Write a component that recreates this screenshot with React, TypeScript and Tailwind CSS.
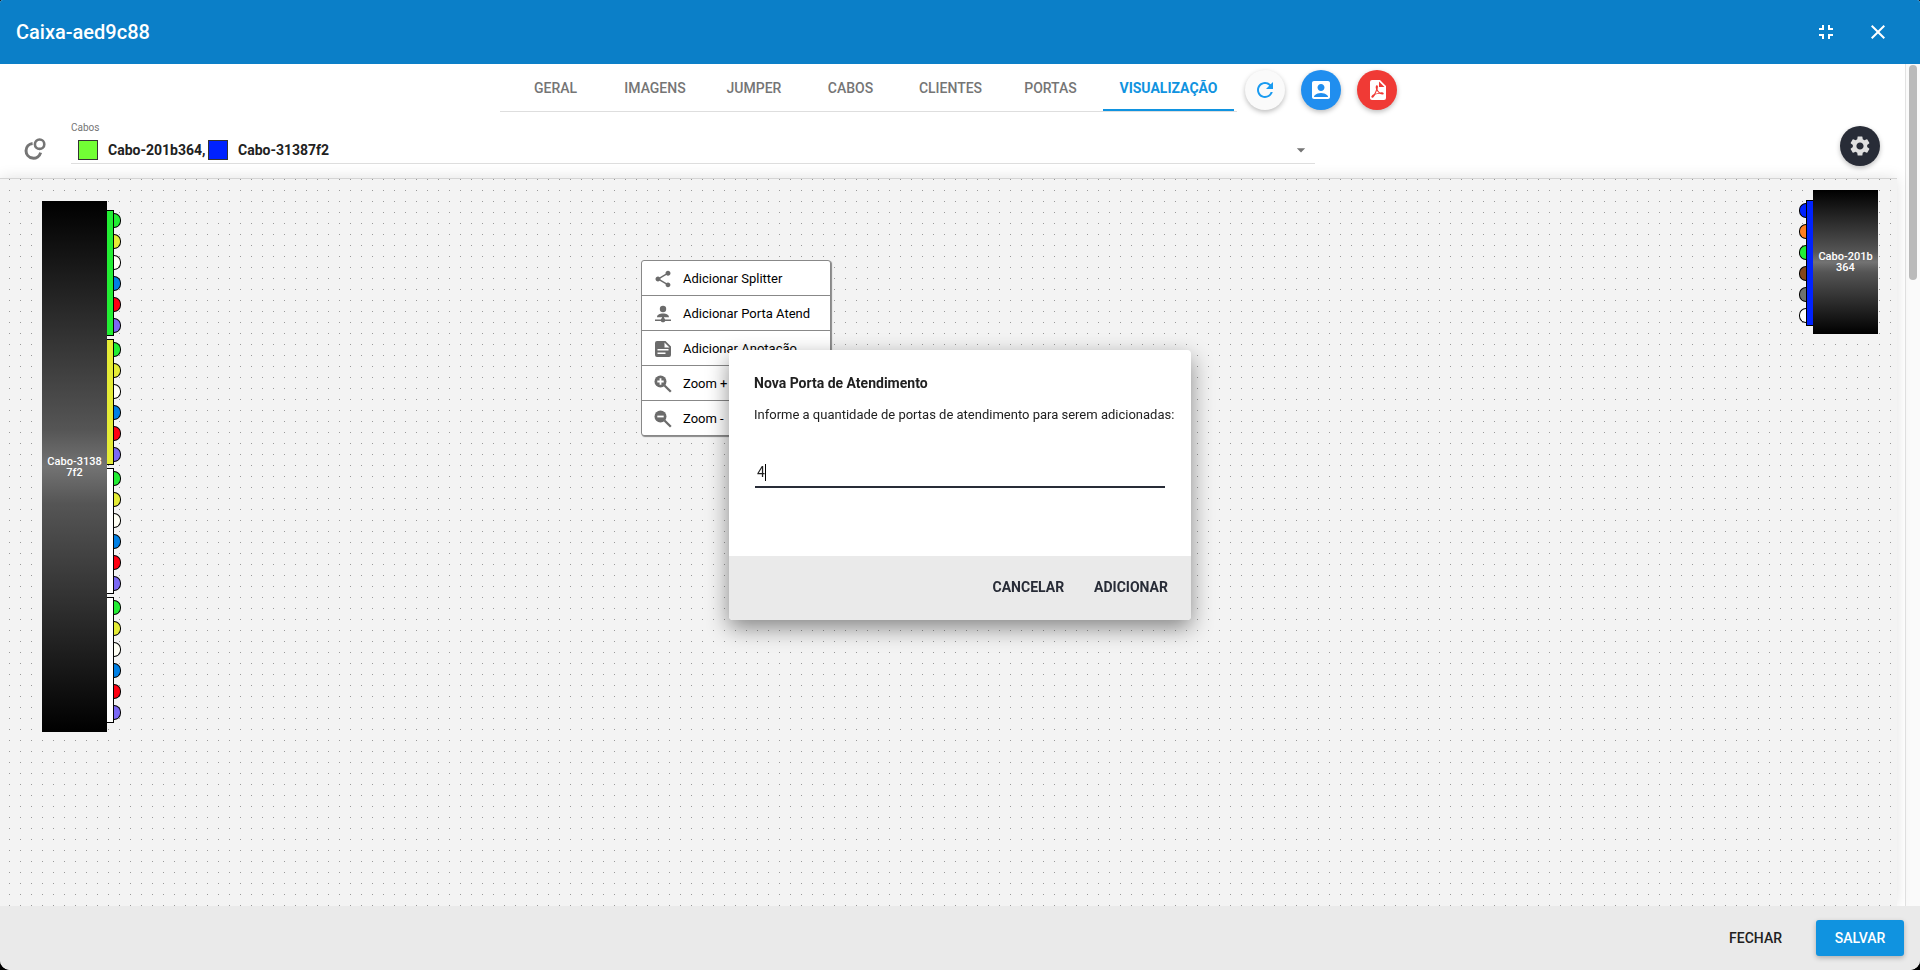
import { useState } from "react";
import type { ReactNode } from "react";
import {
  MdAccountBox,
  MdArrowDropDown,
  MdClose,
  MdFullscreenExit,
  MdRefresh,
  MdSettings,
  MdShare,
} from "react-icons/md";

type Tube = { color: string; ports: string[] };

const tabs = [
  { label: "GERAL", width: "w-[89px]" },
  { label: "IMAGENS", width: "w-[110px]" },
  { label: "JUMPER", width: "w-[88px]" },
  { label: "CABOS", width: "w-[105px]" },
  { label: "CLIENTES", width: "w-[95px]" },
  { label: "PORTAS", width: "w-[105px]" },
  { label: "VISUALIZAÇÃO", width: "w-[131px]" },
];

const leftPorts = [
  "bg-[#22ee33]",
  "bg-[#e5ec35]",
  "bg-[#fffff5]",
  "bg-[#0080e5]",
  "bg-[#ff0011]",
  "bg-[#7b68f5]",
];

const leftTubes: Tube[] = [
  { color: "bg-[#22ee33]", ports: leftPorts },
  { color: "bg-[#e5ec35]", ports: leftPorts },
  { color: "bg-white", ports: leftPorts },
  { color: "bg-white", ports: leftPorts },
];

const rightTubes: Tube[] = [
  {
    color: "bg-[#0022ff]",
    ports: [
      "bg-[#0022ff]",
      "bg-[#ff7f1f]",
      "bg-[#22ee33]",
      "bg-[#84471c]",
      "bg-[#6f736f]",
      "bg-white",
    ],
  },
];

function RotateIcon() {
  return (
    <svg viewBox="0 0 22 22" className="size-[22px]" fill="none" stroke="#757575">
      <circle cx="15.6" cy="6.2" r="4.7" strokeWidth="2.6" />
      <path d="M8.6 5.4A7.4 7.4 0 1 0 16.6 14.6" strokeWidth="3" />
    </svg>
  );
}

function PdfIcon() {
  return (
    <svg viewBox="0 0 24 24" className="size-6" fill="currentColor">
      <path d="M14 9h5.5L14 3.5V9M7 2h8l6 6v12a2 2 0 0 1-2 2H7c-1.11 0-2-.9-2-2V4a2 2 0 0 1 2-2m4.93 10.44c.41.9.93 1.64 1.53 2.15l.41.32c-.87.16-2.07.44-3.34.93l-.11.04.5-1.04c.45-.87.78-1.66 1.01-2.4m6.48 3.81c.18-.18.27-.41.28-.66.03-.2-.02-.39-.12-.55-.29-.47-1.04-.69-2.28-.69l-1.29.07-.87-.58c-.63-.52-1.2-1.43-1.6-2.56l.04-.14c.33-1.33.64-2.94-.02-3.6a.85.85 0 0 0-.61-.24h-.24c-.37 0-.7.39-.79.77-.37 1.33-.15 2.06.22 3.27v.01c-.25.88-.57 1.9-1.08 2.93l-.96 1.8-.89.49c-1.2.75-1.77 1.59-1.88 2.12-.04.19-.02.36.05.54l.03.05.48.31.44.11c.81 0 1.73-.95 2.97-3.07l.18-.07c1.03-.33 2.31-.56 4.03-.75 1.03.51 2.24.74 3 .74.44 0 .74-.11.91-.3" />
    </svg>
  );
}

function PortIcon() {
  return (
    <svg viewBox="0 0 18 18" className="size-[18px]" fill="currentColor">
      <circle cx="9" cy="4" r="3.2" />
      <path d="M3 12.2C3 9.6 5.6 8.4 9 8.4s6 1.2 6 3.8zM8 12h2v2H8zM1 14.4h5.8c.3-.8 1.2-1.3 2.2-1.3s1.9.5 2.2 1.3H17v1.5h-5.8c-.3.8-1.2 1.3-2.2 1.3s-1.9-.5-2.2-1.3H1z" />
    </svg>
  );
}

function NoteIcon() {
  return (
    <svg viewBox="0 0 18 18" className="size-[18px]" fill="currentColor">
      <path
        fillRule="evenodd"
        d="M3 1h8.500L17 6.500V15a2 2 0 0 1-2 2H3a2 2 0 0 1-2-2V3a2 2 0 0 1 2-2zm7.500 1.500v5h5zM3.500 9v1.500h11V9zm0 3.500V14h8v-1.500z"
      />
    </svg>
  );
}

function ZoomIcon({ plus = false }: { plus?: boolean }) {
  return (
    <svg viewBox="0 0 18 18" className="size-[18px]" fill="currentColor">
      <circle cx="6.5" cy="6.5" r="6" />
      <path d="M10.5 10.5l6.300 6.300" stroke="currentColor" strokeWidth="2.3" />
      <path
        d={plus ? "M3.300 6.500h6.400M6.500 3.300v6.400" : "M3.300 6.500h6.400"}
        stroke="white"
        strokeWidth="1.8"
      />
    </svg>
  );
}

const menuItems: { label: string; icon: ReactNode }[] = [
  { label: "Adicionar Splitter", icon: <MdShare size={20} /> },
  { label: "Adicionar Porta Atend", icon: <PortIcon /> },
  { label: "Adicionar Anotação", icon: <NoteIcon /> },
  { label: "Zoom +", icon: <ZoomIcon plus /> },
  { label: "Zoom -", icon: <ZoomIcon /> },
];

function Cable({
  name,
  tubes,
  mirrored = false,
}: {
  name: string;
  tubes: Tube[];
  mirrored?: boolean;
}) {
  return (
    <div className={`flex ${mirrored ? "flex-row-reverse" : ""}`}>
      <div className="flex w-[65px] items-center bg-[linear-gradient(#000000,#555555_43%,#737373_50%,#555555_57%,#000000)] px-1 text-center text-[11px] leading-[11px] font-medium break-all text-white">
        {name}
      </div>
      <div
        className={`flex flex-col gap-[3px] ${
          mirrored ? "pt-2.5 pb-2" : "py-[9px]"
        }`}
      >
        {tubes.map((tube, i) => (
          <div
            key={i}
            className={`flex h-[126px] ${mirrored ? "flex-row-reverse" : ""}`}
          >
            <div
              className={`w-[7px] border-y border-black ${tube.color} ${
                mirrored ? "border-l" : "border-r"
              }`}
            />
            <div className="flex flex-col gap-1.5 pt-[3px]">
              {tube.ports.map((port, j) => (
                <div
                  key={j}
                  className={`h-[15px] w-[7px] border border-black ${port} ${
                    mirrored
                      ? "rounded-l-full border-r-0"
                      : "rounded-r-full border-l-0"
                  }`}
                />
              ))}
            </div>
          </div>
        ))}
      </div>
    </div>
  );
}

export default function App() {
  const [activeTab, setActiveTab] = useState("VISUALIZAÇÃO");
  const [quantity, setQuantity] = useState("4");

  return (
    <div className="h-screen bg-black font-[Roboto,sans-serif] text-[#212121]">
      <div className="flex h-full flex-col overflow-hidden rounded-t-[3px] rounded-b-[10px] bg-white">
        <header className="flex h-16 shrink-0 items-center bg-[#0b7fc8] px-4 text-white">
          <h1 className="flex-1 text-xl font-medium">Caixa-aed9c88</h1>
          <div className="flex gap-7 pr-3.5">
            <button type="button" aria-label="Sair da tela cheia">
              <MdFullscreenExit size={24} />
            </button>
            <button type="button" aria-label="Fechar janela">
              <MdClose size={24} />
            </button>
          </div>
        </header>

        <div className="flex min-h-0 flex-1">
          <main className="flex min-w-0 flex-1 flex-col">
            <div className="flex justify-center pr-2">
              <nav className="flex h-12 w-[737px] justify-end border-b border-[#dedede] pr-[3px]">
                {tabs.map((tab) => (
                  <button
                    key={tab.label}
                    type="button"
                    onClick={() => setActiveTab(tab.label)}
                    className={`h-[47px] border-b-2 pt-0.5 text-sm ${tab.width} ${
                      activeTab === tab.label
                        ? "border-[#1093e0] font-bold text-[#1093e0]"
                        : "border-transparent font-medium text-[#757575]"
                    }`}
                  >
                    {tab.label}
                  </button>
                ))}
              </nav>
              <div className="flex gap-4 pt-1.5 pl-2">
                <button
                  type="button"
                  aria-label="Atualizar"
                  className="flex size-10 items-center justify-center rounded-full bg-[#fafafa] text-[#1a9bf0] shadow-[0_2px_5px_rgba(0,0,0,0.26)]"
                >
                  <MdRefresh size={24} />
                </button>
                <button
                  type="button"
                  aria-label="Clientes"
                  className="flex size-10 items-center justify-center rounded-full bg-[#208eef] text-white shadow-[0_2px_5px_rgba(0,0,0,0.26)]"
                >
                  <MdAccountBox size={24} />
                </button>
                <button
                  type="button"
                  aria-label="Gerar PDF"
                  className="flex size-10 items-center justify-center rounded-full bg-[#f03a35] text-white shadow-[0_2px_5px_rgba(0,0,0,0.26)]"
                >
                  <PdfIcon />
                </button>
              </div>
            </div>

            <div className="flex h-[66px] items-start pr-[25px] pl-6">
              <button type="button" aria-label="Girar cabos" className="mt-[26px]">
                <RotateIcon />
              </button>
              <div className="relative ml-[25px] w-[67%] border-b border-[#dedede] pt-2.5">
                <label
                  htmlFor="cabos"
                  className="block text-[10px] leading-[11px] text-[#757575]"
                >
                  Cabos
                </label>
                <div className="flex h-[30px] items-center pt-1 pl-[7px] text-sm font-bold">
                  <span className="size-5 border border-[#333333] bg-[#72ff35]" />
                  <span className="ml-2.5 w-[95px] whitespace-nowrap">
                    Cabo-201b364,
                  </span>
                  <span className="ml-[5px] size-5 border border-[#333333] bg-[#0022ff]" />
                  <span className="ml-2.5 flex-1">Cabo-31387f2</span>
                  <MdArrowDropDown size={20} className="mr-1 text-[#757575]" />
                </div>
                <select id="cabos" className="absolute inset-0 opacity-0">
                  <option>Cabo-201b364, Cabo-31387f2</option>
                </select>
              </div>
              <button
                type="button"
                aria-label="Configurações"
                className="mt-3.5 ml-auto flex size-10 items-center justify-center rounded-full bg-[#282c37] text-[#e0e0e0] shadow-[0_2px_5px_rgba(0,0,0,0.26)]"
              >
                <MdSettings size={24} />
              </button>
            </div>

            <div className="relative mr-2 min-h-0 flex-1 border-t border-[#d4d4d4] bg-[#f3f3f3] bg-[linear-gradient(#f3f3f3_10px,transparent_10px),linear-gradient(90deg,#f3f3f3_10px,#999999_10px)] bg-size-[11px_11px] bg-position-[-1px_1px] shadow-[0_0_14px_rgba(0,0,0,0.12)]">
              <div className="absolute top-[22px] left-[42px]">
                <Cable name="Cabo-31387f2" tubes={leftTubes} />
              </div>
              <div className="absolute top-[11px] right-[19px]">
                <Cable name="Cabo-201b364" tubes={rightTubes} mirrored />
              </div>

              <ul className="absolute top-[81px] left-[641px] w-[190px] divide-y divide-[#888888] rounded-[3px] border border-[#888888] bg-white shadow-[1px_1px_1px_#888888]">
                {menuItems.map((item) => (
                  <li key={item.label}>
                    <button
                      type="button"
                      className="flex h-[34px] w-full items-center gap-2.5 pt-0.5 pl-[11px] text-[13px] text-black"
                    >
                      <span className="flex w-5 justify-center text-[#6b6b6b]">
                        {item.icon}
                      </span>
                      {item.label}
                    </button>
                  </li>
                ))}
              </ul>
            </div>
          </main>
          <div className="w-[15px] shrink-0 border-l border-[#e2e2e2] bg-[#fafafa] px-[3px] pt-px">
            <div className="h-[215px] w-2 rounded-full bg-[#bababa]" />
          </div>
        </div>

        <footer className="z-10 flex h-16 shrink-0 items-center justify-end gap-[34px] bg-[#eaeaea] pr-4 text-sm font-medium">
          <button type="button">FECHAR</button>
          <button
            type="button"
            className="h-9 w-[88px] rounded-[3px] bg-[#1093e0] text-white shadow-[0_2px_5px_rgba(0,0,0,0.26)]"
          >
            SALVAR
          </button>
        </footer>
      </div>

      <div className="pointer-events-none fixed inset-0 z-20 flex items-center justify-center">
        <form
          role="dialog"
          aria-labelledby="dialog-title"
          onSubmit={(e) => e.preventDefault()}
          className="pointer-events-auto w-[462px] overflow-hidden rounded-[4px] bg-white shadow-[0_8px_22px_rgba(0,0,0,0.45)]"
        >
          <div className="h-[206px] px-[25px] pt-6">
            <h2 id="dialog-title" className="text-sm leading-[18px] font-bold">
              Nova Porta de Atendimento
            </h2>
            <label
              htmlFor="quantity"
              className="mt-3.5 block text-[13px] leading-[18px] whitespace-nowrap"
            >
              Informe a quantidade de portas de atendimento para serem
              adicionadas:
            </label>
            <div className="mx-px mt-[34px] flex h-[30px] items-center border-b-2 border-[#282c37] pl-0.5">
              <input
                id="quantity"
                value={quantity}
                onChange={(e) => setQuantity(e.target.value)}
                className="field-sizing-content h-6 shrink-0 text-sm caret-transparent outline-none"
              />
              <span className="h-[17px] w-px bg-black" />
            </div>
          </div>
          <div className="flex h-16 items-center justify-end gap-[30px] bg-[#eaeaea] pr-[23px] pb-0.5 text-sm font-bold text-[#282c37]">
            <button type="button">CANCELAR</button>
            <button type="submit">ADICIONAR</button>
          </div>
        </form>
      </div>
    </div>
  );
}
